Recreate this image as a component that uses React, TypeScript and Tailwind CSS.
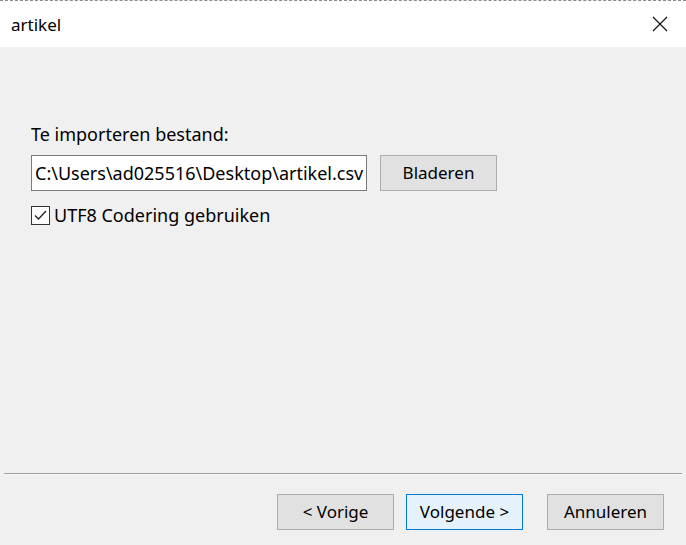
import React from "react";

const font = { fontFamily: '"Noto Sans", "Open Sans", sans-serif' };

const DialogButton = ({
  label,
  primary = false,
}: {
  label: string;
  primary?: boolean;
}) => (
  <button
    className={
      primary
        ? "h-[36px] w-[117px] border border-[#0078d7] bg-[#e5f1fb] text-[17px] text-black"
        : "h-[36px] w-[117px] border border-[#adadad] bg-[#e1e1e1] text-[17px] text-black"
    }
  >
    {label}
  </button>
);

const App = () => {
  return (
    <div
      className="flex h-[545px] w-[686px] flex-col bg-[#f0f0f0] text-black"
      style={font}
    >
      {/* title bar */}
      <div className="flex h-[47px] items-center justify-between border-t border-dashed border-[#8a8a8a] bg-white pl-[11px] pr-[18px]">
        <span className="text-[17px] leading-none">artikel</span>
        <svg width="16" height="16" viewBox="0 0 16 16">
          <path d="M1 1 L15 15 M15 1 L1 15" stroke="#111" strokeWidth="1.2" />
        </svg>
      </div>

      {/* body */}
      <div className="flex flex-1 flex-col pl-[31px] pt-[75px]">
        <div className="text-[18px] leading-[24px]">Te importeren bestand:</div>
        <div className="mt-[9px] flex items-center">
          <div className="flex h-[36px] w-[336px] items-center overflow-hidden border border-[#7a7a7a] bg-white pl-[3px] text-[18px] whitespace-nowrap">
            C:\Users\ad025516\Desktop\artikel.csv
          </div>
          <div className="ml-[13px]">
            <DialogButton label="Bladeren" />
          </div>
        </div>
        <label className="mt-[12px] flex items-center gap-[4px]">
          <span className="flex h-[19px] w-[19px] items-center justify-center border border-[#333] bg-white">
            <svg width="15" height="15" viewBox="0 0 15 15">
              <path
                d="M2 7.5 L5.5 11 L13 3"
                fill="none"
                stroke="#222"
                strokeWidth="1.3"
              />
            </svg>
          </span>
          <span className="text-[18px] leading-[24px]">UTF8 Codering gebruiken</span>
        </label>
      </div>

      {/* separator */}
      <div className="mx-[4px] h-[2px] border-t border-[#a0a0a0] bg-[#f8f8f8]" />

      {/* footer buttons */}
      <div className="flex h-[70px] items-start justify-end pr-[22px] pt-[19px]">
        <DialogButton label="< Vorige" />
        <div className="ml-[12px]">
          <DialogButton label="Volgende >" primary />
        </div>
        <div className="ml-[24px]">
          <DialogButton label="Annuleren" />
        </div>
      </div>
    </div>
  );
};

export default App;
